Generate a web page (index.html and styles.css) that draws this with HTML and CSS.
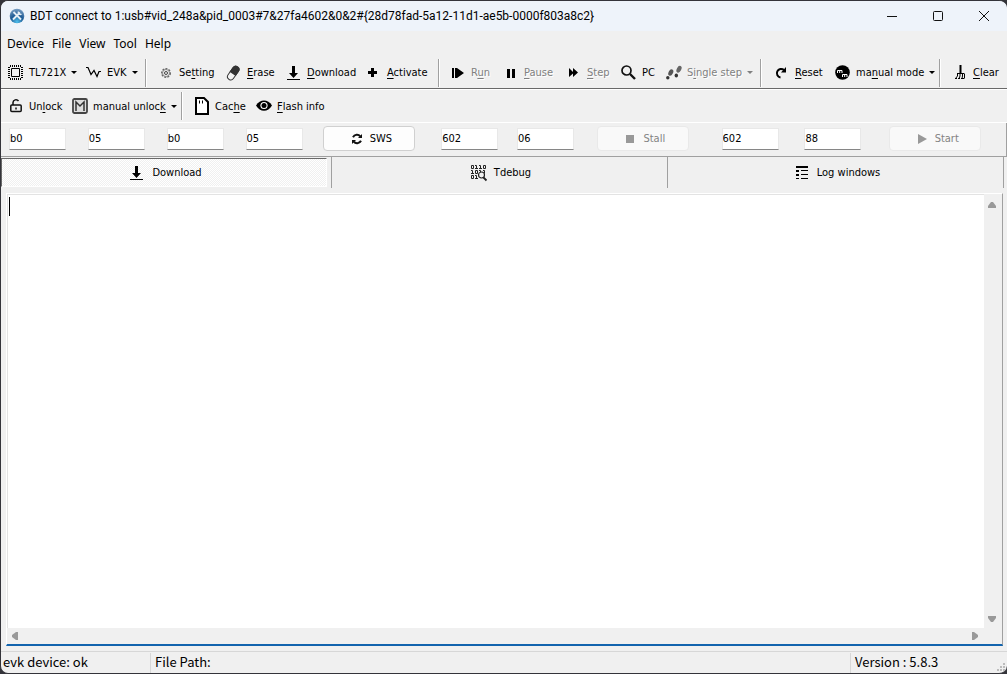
FILE: index.html
```
<!DOCTYPE html>
<html lang="en">
<head>
<meta charset="utf-8">
<title>BDT</title>
<link rel="stylesheet" href="styles.css">
</head>
<body>
<div class="window">
  <header class="titlebar">
    <svg class="app-icon" viewBox="0 0 16 16"><defs><radialGradient id="orb" cx=".5" cy=".9" r=".9"><stop offset="0" stop-color="#4fc0ee"/><stop offset=".5" stop-color="#1f5a94"/><stop offset="1" stop-color="#7a9fc4"/></radialGradient></defs><circle cx="8" cy="8" r="7.3" fill="url(#orb)"/><path d="M4.500 4l7.500 7.500M11 4.500L4 11.500" stroke="#e6eef6" stroke-width="1.800"/><path d="M9.500 3.500a2 2 0 0 0 3 2.500" fill="none" stroke="#e6eef6" stroke-width="1.400"/></svg>
    <h1 class="title">BDT connect to 1:usb#vid_248a&amp;pid_0003#7&amp;27fa4602&amp;0&amp;2#{28d78fad-5a12-11d1-ae5b-0000f803a8c2}</h1>
    <div class="caption-buttons">
      <button class="caption" aria-label="Minimize"><svg viewBox="0 0 12 12"><path d="M1 6.500h10"/></svg></button>
      <button class="caption" aria-label="Maximize"><svg viewBox="0 0 12 12"><rect x="1.500" y="1.500" width="9" height="9" rx="1"/></svg></button>
      <button class="caption" aria-label="Close"><svg viewBox="0 0 12 12"><path d="M1 1l10 10M11 1L1 11"/></svg></button>
    </div>
  </header>

  <nav class="menubar">
    <button>Device</button><button>File</button><button>View</button><button>Tool</button><button>Help</button>
  </nav>

  <div class="toolbar toolbar-main">
    <button class="tool"><svg viewBox="0 0 16 16"><path d="M3.500 3.500h8v8h-8z" fill="none" stroke="#000"/><path d="M2 1h12M2 14h12" stroke="#000" stroke-width="2" stroke-dasharray="1 1"/><path d="M1 2v12M14 2v12" stroke="#000" stroke-width="2" stroke-dasharray="1 1"/></svg><span>TL721X</span><i class="drop"></i></button>
    <button class="tool"><svg viewBox="0 0 16 16"><path d="M0 2.500h2l3 7 3-4 3 6 2-5h2" fill="none" stroke="#000" stroke-width="1.200"/></svg><span>EVK</span><i class="drop"></i></button>
    <span class="sep"></span>
    <button class="tool"><svg viewBox="0 0 16 16"><circle cx="8" cy="8" r="4.300" fill="none" stroke="#666" stroke-width="1.400" stroke-dasharray="2 1.200"/><circle cx="8" cy="8" r="3.500" fill="none" stroke="#777" stroke-width=".8"/><circle cx="8" cy="8" r="1.500" fill="none" stroke="#444"/></svg><span>Se<u>t</u>ting</span></button>
    <button class="tool"><svg viewBox="0 0 16 16"><g transform="rotate(35 7 8)"><rect x="4" y=".5" width="6.500" height="15" rx="3.200" fill="#f4f4f4" stroke="#333"/><path d="M3.500 9V3.500a3.700 3.700 0 0 1 7.500 0V9z" fill="#333"/></g></svg><span><u>E</u>rase</span></button>
    <button class="tool"><svg viewBox="0 0 16 16"><path d="M6 1h3v7h3l-4.500 5L3 8h3zM1 14h13v1H1z"/></svg><span><u>D</u>ownload</span></button>
    <button class="tool"><svg viewBox="0 0 16 16"><path d="M5 3h3v3h3v3H8v3H5V9H2V6h3z"/></svg><span><u>A</u>ctivate</span></button>
    <span class="sep"></span>
    <button class="tool" disabled><svg viewBox="0 0 16 16"><path d="M2 3h2v10H2zM5 3h2l7 5-7 5H5z"/></svg><span>R<u>u</u>n</span></button>
    <button class="tool" disabled><svg viewBox="0 0 16 16"><path d="M4 4h3v9H4zM9 4h3v9H9z"/></svg><span><u>P</u>ause</span></button>
    <button class="tool" disabled><svg viewBox="0 0 16 16"><path d="M3 3l4 4V3l5 4.500-5 4.500V8.500L3 12z"/></svg><span><u>S</u>tep</span></button>
    <button class="tool"><svg viewBox="0 0 16 16"><circle cx="5.500" cy="5.500" r="4.500" fill="none" stroke="#111" stroke-width="1.700"/><path d="M9 9l5 5" stroke="#111" stroke-width="2.400"/></svg><span>PC</span></button>
    <button class="tool" disabled><svg viewBox="0 0 16 16" fill="#333"><ellipse cx="4.800" cy="7.500" rx="2.200" ry="3.400" transform="rotate(28 4.800 7.500)" fill="#555"/><ellipse cx="1.800" cy="12.800" rx="1.700" ry="1.700"/><ellipse cx="13" cy="4.300" rx="2.200" ry="3.600" transform="rotate(28 13 4.300)" fill="#666"/><ellipse cx="10.300" cy="10.500" rx="1.700" ry="2"/></svg><span>S<u>i</u>ngle step</span><i class="drop"></i></button>
    <span class="sep"></span>
    <button class="tool"><svg viewBox="0 0 16 16"><path d="M6.500 12.500A4.300 4.300 0 1 1 10 5" fill="none" stroke="#000" stroke-width="2"/><path d="M7 7.500h5V2z"/></svg><span><u>R</u>eset</span></button>
    <button class="tool"><svg viewBox="0 0 16 16"><circle cx="7.500" cy="7.500" r="7.300"/><path d="M2.500 8V5.500H7V8M4.700 5.500V8M7.500 12V9.500H12V12M9.700 9.500V12" fill="none" stroke="#fff"/></svg><span>ma<u>n</u>ual mode</span><i class="drop"></i></button>
    <span class="sep"></span>
    <button class="tool"><svg viewBox="0 0 16 16"><path d="M8.500 0v8" stroke="#000" stroke-width="2"/><path d="M5 8.500h7.500M5.500 9v2l-2 2.500M8 9v2l-1 2.500M10.500 9v2l-.5 2.500M12.500 9v4.500M3 13.500h2M6 13.500h2M9 13.500h3" fill="none" stroke="#000"/></svg><span><u>C</u>lear</span></button>
  </div>

  <div class="toolbar toolbar-second">
    <button class="tool"><svg viewBox="0 0 16 16" fill="none" stroke="#111" stroke-width="1.500"><rect x="2.800" y="7" width="10.400" height="6.500" rx="1"/><path d="M5 7V4.500a3 2.800 0 0 1 5.500-1.500M8 9.500v2"/></svg><span>Un<u>l</u>ock</span></button>
    <button class="tool"><svg viewBox="0 0 16 16"><rect x="1" y="1" width="14" height="14" rx="1.500" fill="#ddd" stroke="#444" stroke-width="1.800"/><path d="M4 13V4l4 4 4-4v9" fill="none" stroke="#333" stroke-width="1.500"/></svg><span>manual unloc<u>k</u></span><i class="drop"></i></button>
    <span class="sep"></span>
    <button class="tool"><svg class="tall" viewBox="0 0 16 18"><path d="M2 1h8l4 4v12H2z" fill="#fff" stroke="#000" stroke-width="2"/><path d="M5.500 3.500v3M8.500 3.500v3" stroke="#000"/></svg><span>Cac<u>h</u>e</span></button>
    <button class="tool"><svg viewBox="0 0 16 16"><path d="M0 7.500C4 .8 12 .8 16 7.500 12 14.500 4 14.500 0 7.500z"/><circle cx="8" cy="7.500" r="3.600" fill="#fff"/><circle cx="8" cy="7.500" r="2.500"/></svg><span><u>F</u>lash info</span></button>
  </div>

  <form class="registers">
    <input aria-label="Write address high" value="b0">
    <input aria-label="Write address low" value="05">
    <input aria-label="Read address high" value="b0">
    <input aria-label="Read address low" value="05">
    <button type="button"><svg viewBox="0 0 12 12"><path d="M2 4.200C3.500 1.200 7.500 1 9.200 3.300M10 7.800C8.500 10.800 4.500 11 2.800 8.700" fill="none" stroke="#111" stroke-width="2"/><path d="M7 5h4V1zM5 7H1v4z"/></svg>SWS</button>
    <input aria-label="Stall address" value="602">
    <input aria-label="Stall value" value="06">
    <button type="button" disabled><svg viewBox="0 0 12 12"><path d="M2 2h8v8H2z"/></svg>Stall</button>
    <input aria-label="Start address" value="602">
    <input aria-label="Start value" value="88">
    <button type="button" disabled><svg viewBox="0 0 12 12"><path d="M2 1l9 5-9 5z"/></svg>Start</button>
  </form>

  <div class="tabs" role="tablist">
    <button role="tab" aria-selected="true" class="tab"><svg viewBox="0 0 16 16"><path d="M6 1h3v7h3l-4.500 5L3 8h3zM1 14h13v1H1z"/></svg>Download</button>
    <button role="tab" aria-selected="false" class="tab"><svg viewBox="0 0 16 16" fill="none" stroke="#222"><path d="M.5 .5h2v3h-2zM4 .5h1.500v3M4 3.500h3M8 .5h1.500v3M8 3.500h3M12.500 .5h2v3h-2zM0 5.500h1.500v3M0 8.500h3M4.500 5.500h2v3h-2zM8 5.500h1.500v3M12 5.500h1.500v3M.5 10.500h2v3h-2zM4 10.500h1.500v3M4 13.500h3"/><circle cx="10.500" cy="10" r="3" stroke-width="1.200" fill="#f0f0f0"/><path d="M12.500 12.500l3 3" stroke-width="1.800"/></svg>Tdebug</button>
    <button role="tab" aria-selected="false" class="tab"><svg viewBox="0 0 16 16"><path d="M2 1h12v2H2zM2 5h3v2H2zM2 9h3v2H2zM2 13h3v1H2zM7 5h7v1H7zM7 9h7v1H7zM7 13h7v1H7z"/></svg>Log windows</button>
  </div>

  <main class="log">
    <textarea aria-label="Download log"></textarea>
    <span class="text-cursor"></span>
    <div class="scroll-y"><button aria-label="Scroll up"><svg viewBox="0 0 8 6"><path d="M3 0h2l3 4v2H0V4z"/></svg></button><button aria-label="Scroll down"><svg viewBox="0 0 8 6"><path d="M0 0h8v2L5 6H3L0 2z"/></svg></button></div>
    <div class="scroll-x"><button aria-label="Scroll left"><svg viewBox="0 0 6 8"><path d="M6 0v8H4L0 5V3l4-3z"/></svg></button><button aria-label="Scroll right"><svg viewBox="0 0 6 8"><path d="M0 0h2l4 3v2L2 8H0z"/></svg></button></div>
  </main>

  <footer class="status">
    <span>evk device: ok</span><span>File Path:</span><span>Version : 5.8.3</span>
    <svg class="grip" viewBox="0 0 8 8"><path d="M6 0h2v2H6zM3 3h2v2H3zM6 3h2v2H6zM0 6h2v2H0zM3 6h2v2H3zM6 6h2v2H6z"/></svg>
  </footer>
</div>
</body>
</html>
```

FILE: styles.css
```
* { box-sizing: border-box; }
body { margin: 0; background: #34343a; font-family: "DejaVu Sans Condensed", "Noto Sans", sans-serif; font-size: 11px; color: #000; }
button { font: inherit; color: inherit; background: none; border: 0; padding: 0; margin: 0; }
svg { display: block; flex: none; overflow: visible; }
u { text-underline-offset: 2px; }
.window { display: flex; flex-direction: column; height: 100vh; background: #f0f0f0; border: 1px solid #34343a; border-right-width: 0; border-radius: 8px; overflow: hidden; }

.titlebar { display: flex; align-items: center; height: 30px; padding-left: 8px; background: #eef3fa; font-family: Roboto, "Noto Sans", sans-serif; }
.app-icon { width: 16px; height: 16px; }
.title { flex: 1; margin: 0 0 0 5px; font-size: 12px; font-weight: 400; line-height: 28px; white-space: nowrap; }
.caption-buttons { display: flex; }
.caption { display: grid; place-items: center; width: 46px; height: 28px; }
.caption svg { width: 12px; height: 12px; fill: none; stroke: #111; }

.menubar { display: flex; align-items: center; gap: 8px; height: 26px; padding-left: 6px; font-family: "Noto Sans", sans-serif; font-size: 12px; line-height: 24px; }

.toolbar { display: grid; align-items: center; padding-left: 7px; }
.toolbar-main { height: 32px; border-bottom: 1px solid #696969; grid-template-columns: 78px 59px 13px 68px 60px 80px 72px 12px 53px 63px 55px 45px 94px 14px 61px 104px 13px 1fr; }
.toolbar-second { height: 34px; border-top: 1px solid #fff; border-bottom: 1px solid #fff; grid-template-columns: 64px 109px 13px 62px 1fr; }
.tool { display: flex; align-items: center; gap: 5px; height: 24px; white-space: nowrap; }
.tool svg { width: 16px; height: 16px; }
.tool .tall { height: 18px; }
.tool:disabled { color: #808080; text-shadow: 1px 1px #fff; }
.sep { width: 2px; height: 28px; border-left: 1px solid #a0a0a0; border-right: 1px solid #fff; }
.drop { border: 3px solid transparent; border-top-color: currentColor; border-bottom: 0; }

.registers { display: grid; grid-template-columns: 79fr 79fr 79fr 78fr 118fr 76fr 80fr 125fr 83fr 85fr 117fr; align-items: center; height: 34px; margin: 0; padding: 0 0 2px 8px; border-bottom: 1px solid #a0a0a0; border-right: 1px solid #a0a0a0; }
.registers input { width: 57px; height: 22px; padding: 0 0 1px; border: 1px solid #e8e8e8; border-bottom-color: #868686; background: #fff; font: inherit; }
.registers button { display: flex; align-items: center; justify-content: center; gap: 7px; width: 92px; height: 25px; padding-left: 4px; border: 1px solid #d0d0d0; border-radius: 4px; background: #fdfdfd; }
.registers button:disabled { color: #838383; background: #f9f9f9; border-color: #e9e9e9; }
.registers svg { width: 12px; height: 12px; fill: #999; }
.registers button:enabled svg { fill: #111; }

.tabs { display: grid; grid-template-columns: 331fr 336fr 336fr; height: 31px; margin-right: 3px; }
.tab { display: flex; align-items: center; justify-content: center; gap: 7px; padding-left: 3px; border-right: 1px solid #a0a0a0; }
.tab svg { width: 16px; height: 16px; }
.tab[aria-selected="true"] { position: relative; margin-right: 5px; margin-top: 1px; margin-bottom: 1px; border: 1px solid #fff; border-top-color: #696969; border-left-color: #696969; background: repeating-conic-gradient(#fff 0 25%, #f0f0f0 0 50%) 0 0 / 2px 2px; }
.tab[aria-selected="true"]::after { content: ""; position: absolute; top: -2px; right: -6px; width: 1px; height: 31px; background: #a0a0a0; }

.log { position: relative; flex: 1; display: grid; grid-template: 1fr 16px / 1fr 18px; margin: 5px 4px 5px 5px; border: 1px solid #fff; border-right-color: #a0a0a0; border-bottom: 2px solid #1264ae; }
.log textarea { width: 100%; height: 100%; padding: 3px; border: 0; border-top: 1px solid #e3e3e3; border-left: 1px solid #e3e3e3; outline: 0; resize: none; background: #fff; font: inherit; }
.text-cursor { position: absolute; left: 2px; top: 3px; width: 1px; height: 19px; background: #000; }
.scroll-y, .scroll-x { display: flex; justify-content: space-between; align-items: center; background: #f0f0f0; }
.scroll-y { flex-direction: column; padding: 8px 2px 6px 0; }
.scroll-x { padding: 0 6px 0 5px; }
.log svg { fill: #999; }
.scroll-y svg { width: 8px; height: 6px; }
.scroll-x svg { width: 6px; height: 8px; }

.status { position: relative; display: grid; grid-template-columns: 149fr 700fr 157fr; height: 22px; border-top: 1px solid #d7d7d7; font-family: "Noto Sans CJK SC", sans-serif; font-size: 13px; line-height: 18px; }
.status span { padding-left: 4px; margin-top: 1px; border-left: 1px solid #d7d7d7; }
.status span:first-child { padding-left: 2px; border-left: 0; }
.grip { position: absolute; right: 2px; bottom: 2px; width: 8px; height: 8px; fill: #bcbcbc; }
```
